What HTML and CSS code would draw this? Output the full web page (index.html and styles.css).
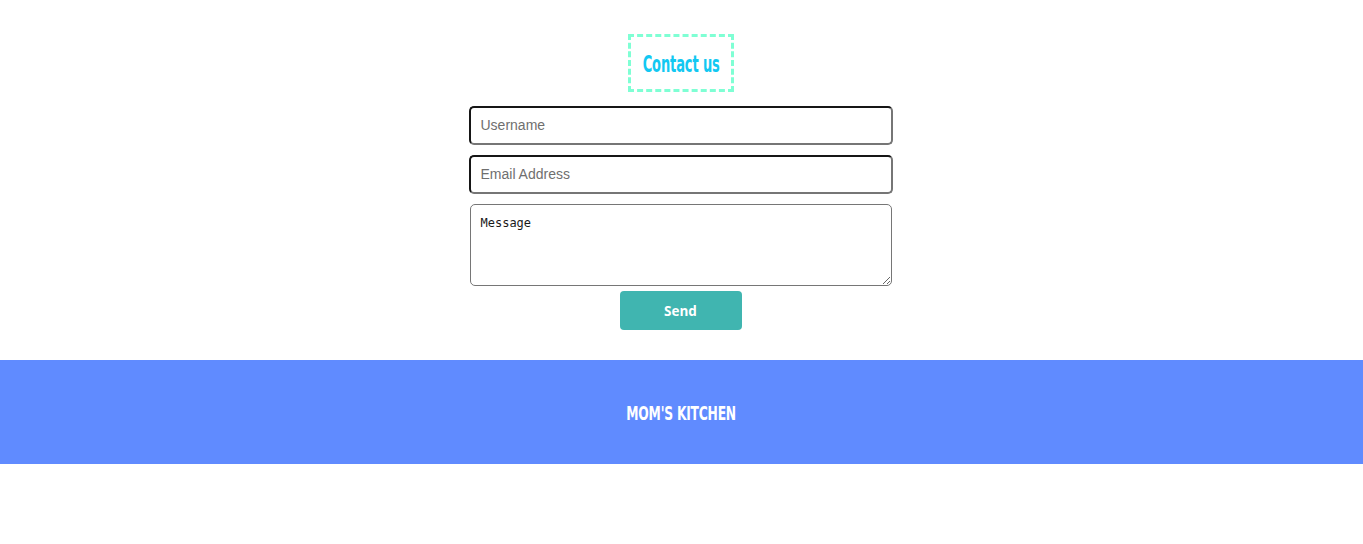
FILE: index.html
```html
<!DOCTYPE html>
<html lang="en">
<head>
<meta charset="utf-8">
<title>Contact us</title>
<link rel="stylesheet" href="styles.css">
</head>
<body>
<section class="contact">
  <h2 class="contact-title"><span class="narrow narrow-title">Contact us</span></h2>
  <form class="contact-form">
    <input class="field" type="text" placeholder="Username">
    <input class="field" type="email" placeholder="Email Address">
    <textarea class="message" placeholder="Message"></textarea>
    <button class="send" type="button">Send</button>
  </form>
</section>
<footer class="footer">
  <p class="footer-title"><span class="narrow narrow-footer">MOM'S KITCHEN</span></p>
</footer>
</body>
</html>
```
FILE: styles.css
```css
html, body {
  margin: 0;
  padding: 0;
  background: #ffffff;
}

.contact {
  display: flex;
  flex-direction: column;
  align-items: center;
  padding: 34px 0 30px;
}

.narrow {
  display: inline-block;
  white-space: nowrap;
  font-family: "DejaVu Sans Condensed", "DejaVu Sans", sans-serif;
  font-stretch: condensed;
  font-weight: bold;
}

.contact-title {
  margin: 0 0 0 -1px;
  box-sizing: border-box;
  width: 106px;
  height: 58px;
  padding-top: 3px;
  border: 3px dashed #7fffd4;
  display: flex;
  align-items: center;
  justify-content: center;
  white-space: nowrap;
  font-size: 23px;
  line-height: 1;
  color: #12c8f2;
}

.narrow-title {
  transform: scaleX(0.63);
  letter-spacing: -0.2px;
}

.contact-form {
  margin-top: 14px;
  display: flex;
  flex-direction: column;
  align-items: center;
  width: 424px;
  margin-left: -2px;
}

.field {
  box-sizing: border-box;
  width: 424px;
  height: 39px;
  margin: 0 0 10px;
  padding: 0 10px 1px;
  border: 2px solid;
  border-color: #161616 #767676 #767676 #161616;
  border-radius: 5px;
  font-family: "Liberation Sans", Arial, sans-serif;
  font-size: 14px;
  color: #222;
  background: #fff;
  outline: none;
}

.field::placeholder {
  color: #6f6f6f;
}

.message {
  box-sizing: border-box;
  width: 422px;
  height: 82px;
  margin: 0;
  padding: 11px 10px 10px;
  border: 1px solid #767676;
  border-radius: 5px;
  font-family: "DejaVu Sans Mono", monospace;
  font-size: 12px;
  color: #111;
  resize: both;
  outline: none;
}

.message::placeholder {
  color: #1a1a1a;
}

.send {
  margin-top: 5px;
  width: 122px;
  height: 39px;
  border: none;
  border-radius: 4px;
  background: #40b5b0;
  color: #ffffff;
  font-family: "Open Sans", "DejaVu Sans", sans-serif;
  font-weight: bold;
  font-size: 13.5px;
  cursor: pointer;
}

.footer {
  height: 104px;
  background: #608bff;
  display: flex;
  align-items: center;
  justify-content: center;
}

.footer-title {
  margin: 0;
  padding-top: 3px;
  font-size: 19px;
  line-height: 1;
  color: #ffffff;
}

.narrow-footer {
  transform: scaleX(0.72);
  letter-spacing: -0.3px;
}
```
